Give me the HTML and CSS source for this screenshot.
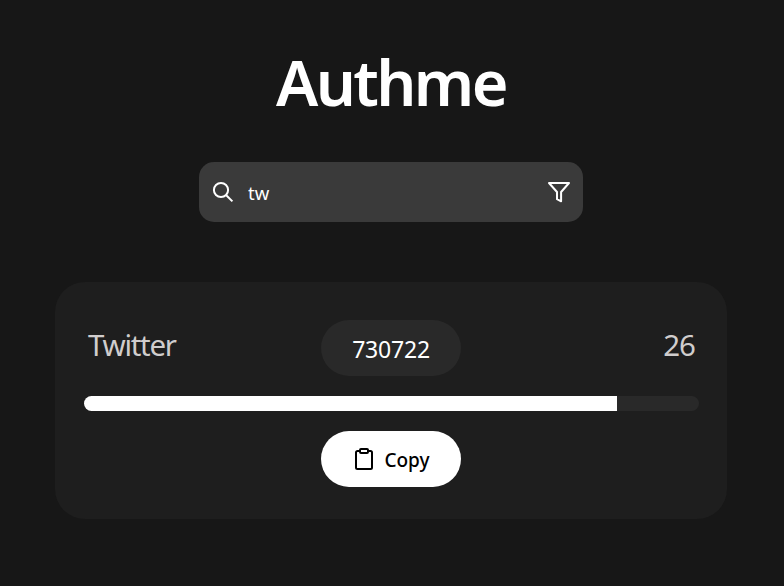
FILE: index.html
```
<!DOCTYPE html>
<html lang="en">
<head>
    <meta charset="UTF-8">
    <meta name="viewport" content="width=device-width, initial-scale=1.0">
    <title>Authme</title>
    <link rel="stylesheet" href="styles.css">
</head>
<body>
    <div class="container">
        <h1 class="title">Authme</h1>

        <div class="search-bar">
            <svg class="search-icon" width="24" height="24" viewBox="0 0 24 24" fill="none" stroke="currentColor" stroke-width="2">
                <circle cx="10" cy="10" r="7.1"></circle>
                <path d="M15 15l6.4 6.4"></path>
            </svg>
            <input class="search-input" id="search" type="text" value="tw" spellcheck="false">
            <svg class="filter-icon" width="24" height="24" viewBox="0 0 24 24" fill="none" stroke="currentColor" stroke-width="2" stroke-linejoin="round">
                <path d="M2 3h20l-7.9 9v9.3L10 19.2V12z"></path>
            </svg>
        </div>

        <div class="card">
            <div class="card-top">
                <h3 class="name">Twitter</h3>
                <div class="code" id="code">730722</div>
                <h3 class="time" id="time">26</h3>
            </div>
            <div class="progress">
                <div class="progress-fill" style="width: 86.67%"></div>
            </div>
            <button class="copy-button" onclick="copyCode()">
                <svg width="24" height="24" viewBox="0 0 24 24" fill="none" stroke="currentColor" stroke-width="2" stroke-linejoin="round">
                    <path d="M8 4H5.500A1.500 1.500 0 0 0 4 5.500V20.500A1.500 1.500 0 0 0 5.500 22H18.500A1.500 1.500 0 0 0 20 20.500V5.500A1.500 1.500 0 0 0 18.500 4H16"></path>
                    <rect x="8" y="2" width="8" height="4" rx="1"></rect>
                </svg>
                <span class="copy-label">Copy</span>
            </button>
        </div>
    </div>
    <script>
        function copyCode() {
            navigator.clipboard.writeText(document.getElementById('code').textContent);
        }
    </script>
</body>
</html>
```
FILE: styles.css
```
* {
    box-sizing: border-box;
}

body {
    margin: 0;
    background-color: #171717;
    color: white;
    font-family: "Segoe UI", "Noto Sans", sans-serif;
    overflow: hidden;
}

.container {
    display: flex;
    flex-direction: column;
    align-items: center;
    width: 782px;
    padding-top: 39px;
}

.title {
    margin: 0;
    font-size: 63px;
    font-weight: 600;
    line-height: 85px;
    letter-spacing: -2.6px;
}

.search-bar {
    display: flex;
    align-items: center;
    width: 384px;
    height: 60px;
    margin-top: 38px;
    padding: 0 12px;
    background-color: #3a3a3a;
    border-radius: 15px;
}

.search-input {
    flex: 1;
    min-width: 0;
    margin: 0 0 0 13px;
    padding: 0;
    border: none;
    outline: none;
    background: none;
    color: white;
    font-family: inherit;
    font-size: 18.5px;
}

.card {
    display: flex;
    flex-direction: column;
    align-items: center;
    width: 672px;
    height: 237px;
    margin-top: 60px;
    padding: 38px 28px 0 29px;
    background-color: #1e1e1e;
    border-radius: 30px;
}

.card-top {
    display: grid;
    grid-template-columns: 1fr 140px 1fr;
    width: 100%;
    height: 56px;
    padding: 0 4px 0 3px;
}

.name,
.time {
    margin: 0;
    color: #d0cdcd;
    font-size: 29.5px;
    font-weight: 400;
    line-height: 50px;
}

.name {
    padding-left: 1px;
    letter-spacing: -1.3px;
}

.time {
    letter-spacing: -1px;
    text-align: right;
}

.code {
    height: 56px;
    margin: 0 1px 0 -1px;
    background-color: #292929;
    border-radius: 28px;
    font-size: 23px;
    line-height: 58px;
    letter-spacing: -0.2px;
    text-align: center;
}

.card-top .code {
    margin: 0;
}

.progress {
    width: 100%;
    height: 15px;
    margin-top: 20px;
    background-color: #292929;
    border-radius: 10px;
    overflow: hidden;
}

.progress-fill {
    height: 100%;
    background-color: white;
}

.copy-button {
    display: flex;
    align-items: center;
    justify-content: center;
    gap: 8px;
    width: 140px;
    height: 56px;
    margin: 20px 1px 0 0;
    padding: 0;
    border: none;
    border-radius: 28px;
    background-color: white;
    color: black;
    font-family: inherit;
    font-size: 19px;
    font-weight: 500;
    cursor: pointer;
}

.copy-label {
    padding-top: 2px;
}
```
